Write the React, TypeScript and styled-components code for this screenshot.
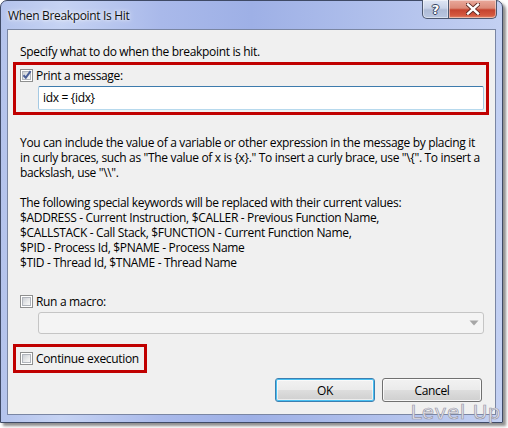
import styled, { createGlobalStyle } from 'styled-components';

const GlobalStyle = createGlobalStyle`
  html, body {
    margin: 0;
    padding: 0;
    background: #fff;
  }
  body {
    font-family: "Open Sans", "Noto Sans", sans-serif;
    font-size: 12px;
    letter-spacing: -0.33px;
    color: #000;
  }
`;

const Page = styled.div`
  width: 508px;
  height: 428px;
  position: relative;
`;

const Window = styled.div`
  position: relative;
  width: 503px;
  height: 423px;
  box-sizing: border-box;
  border: 1px solid #3f4a66;
  border-radius: 7px 7px 0 0;
  background: linear-gradient(90deg, #b4c3ec 0%, #c6d3f3 12%, #a9b9ea 32%, #9eb0e6 50%, #aebeeb 72%, #c3d0f2 100%);
  box-shadow: 3px 3px 3px rgba(0, 0, 0, 0.45);
  display: flex;
  flex-direction: column;
`;

const TitleBar = styled.div`
  height: 28px;
  display: flex;
  align-items: flex-start;
  padding-left: 7px;
`;

const Title = styled.div`
  font-size: 12px;
  line-height: 15px;
  margin-top: 7px;
  color: #111;
  text-shadow: 0 0 6px rgba(255, 255, 255, 0.9), 0 0 3px rgba(255, 255, 255, 0.9);
`;

const CaptionButtons = styled.div`
  margin-left: auto;
  margin-right: 5px;
  margin-top: -1px;
  display: flex;
`;

const CaptionButton = styled.div<{ $close?: boolean }>`
  height: 19px;
  width: ${p => (p.$close ? '48px' : '27px')};
  box-sizing: border-box;
  border: 1px solid #4d5870;
  border-top: none;
  border-left-width: ${p => (p.$close ? '0' : '1px')};
  border-radius: ${p => (p.$close ? '0 0 5px 0' : '0 0 0 5px')};
  background: ${p =>
    p.$close
      ? 'linear-gradient(180deg, #e9a99c 0%, #dc8a78 45%, #c5432f 55%, #d4583f 85%, #e2876a 100%)'
      : 'linear-gradient(180deg, #dfe6f4 0%, #c9d3e8 45%, #aebbd6 55%, #b9c7e1 100%)'};
  box-shadow: inset 0 0 0 1px rgba(255, 255, 255, 0.45);
  display: flex;
  align-items: center;
  justify-content: center;
`;

const HelpGlyph = styled.span`
  font-family: "DejaVu Sans", sans-serif;
  font-weight: bold;
  font-size: 13px;
  line-height: 13px;
  letter-spacing: 0;
  color: #fff;
  text-shadow: 0 0 1px #2a3550, 1px 0 0 #3c4866, -1px 0 0 #3c4866, 0 1px 0 #3c4866, 0 -1px 0 #3c4866;
`;

const Client = styled.div`
  margin: 0 6px 0 6px;
  height: 386px;
  box-sizing: border-box;
  border: 1px solid #7a86a3;
  background: #f0f0f0;
  display: flex;
  flex-direction: column;
`;

const Text = styled.div<{ $indent?: number }>`
  line-height: 15px;
  padding-left: ${p => p.$indent ?? 12}px;
  white-space: nowrap;
`;

const Intro = styled(Text)`
  margin-top: 14px;
`;

const Highlight = styled.div<{ $width: number }>`
  box-sizing: border-box;
  width: ${p => p.$width}px;
  margin-left: 5px;
  border: 3px solid #c00000;
`;

const MessageBox = styled(Highlight)`
  margin-top: 3px;
  height: 53px;
  padding: 3px 0 0 4px;
`;

const CheckRow = styled.label`
  display: flex;
  align-items: center;
  gap: 3px;
  height: 15px;
  line-height: 15px;
  white-space: nowrap;
`;

const Box = styled.span`
  width: 13px;
  height: 13px;
  box-sizing: border-box;
  border: 1px solid #8e8f8f;
  background: #fff;
  padding: 1px;
  display: flex;
  flex-shrink: 0;

  &::before {
    content: '';
    flex: 1;
    background: linear-gradient(135deg, #cbcfd5 0%, #e9eaeb 60%, #f8f8f8 100%);
    border: 1px solid #b0b4bb;
  }
`;

const CheckMark = styled.svg`
  position: absolute;
  left: 1px;
  top: 0;
`;

const BoxWrap = styled.span`
  position: relative;
  display: flex;
`;

const TextInput = styled.div`
  margin: 3px 0 0 18px;
  width: 446px;
  height: 24px;
  box-sizing: border-box;
  background: #fff;
  border: 1px solid #a4c9e3;
  border-top-color: #3d7bad;
  border-bottom-color: #b7d9ed;
  border-radius: 2px;
  padding-left: 4px;
  line-height: 21px;
`;

const Help = styled.div`
  margin-top: 20px;
  display: flex;
  flex-direction: column;
`;

const Gap = styled.div`
  height: 15px;
`;

const MacroRow = styled.div`
  margin: 24px 0 0 12px;
`;

const Dropdown = styled.div`
  margin: 3px 0 0 30px;
  width: 446px;
  height: 22px;
  box-sizing: border-box;
  border: 1px solid #c5c5c5;
  border-radius: 3px;
  background: #f4f4f4;
  display: flex;
  align-items: center;
  justify-content: flex-end;
  padding-right: 4px;
`;

const ContinueBox = styled(Highlight)`
  margin-top: 10px;
  height: 29px;
  padding: 4px 0 0 4px;
`;

const Footer = styled.div`
  margin-top: 5px;
  display: flex;
  justify-content: flex-end;
  gap: 7px;
  padding-right: 13px;
`;

const Button = styled.button<{ $default?: boolean }>`
  width: 100px;
  height: 24px;
  box-sizing: border-box;
  font-family: "Open Sans", "Noto Sans", sans-serif;
  font-size: 12px;
  letter-spacing: -0.33px;
  color: #000;
  border-radius: 3px;
  border: 1px solid ${p => (p.$default ? '#3c7fb1' : '#707070')};
  background: linear-gradient(180deg, #f2f2f2 0%, #ebebeb 48%, #dddddd 52%, #cfcfcf 100%);
  box-shadow: ${p =>
    p.$default ? 'inset 0 0 0 1px #48c0f2, inset 0 0 0 2px rgba(255,255,255,0.6)' : 'inset 0 0 0 1px rgba(255,255,255,0.8)'};
  padding: 0;
`;

const Watermark = styled.span`
  position: absolute;
  right: 7px;
  bottom: 5px;
  font-family: "DejaVu Sans", sans-serif;
  font-size: 20px;
  line-height: 21px;
  letter-spacing: 0.5px;
  color: #e8e8ef;
  -webkit-text-stroke: 0.7px #9696a6;
`;

const Check = ({ checked, label }: { checked?: boolean; label: string }) => (
  <CheckRow>
    <BoxWrap>
      <Box />
      {checked && (
        <CheckMark width="12" height="12" viewBox="0 0 12 12">
          <path d="M2.5 6.2 L4.8 8.6 L9.6 2.2" fill="none" stroke="#4a5f97" strokeWidth="2" />
        </CheckMark>
      )}
    </BoxWrap>
    <span>{label}</span>
  </CheckRow>
);

const helpLines = [
  'You can include the value of a variable or other expression in the message by placing it',
  'in curly braces, such as "The value of x is {x}." To insert a curly brace, use "\\{". To insert a',
  'backslash, use "\\\\".',
];

const keywordLines = [
  'The following special keywords will be replaced with their current values:',
  '$ADDRESS - Current Instruction, $CALLER - Previous Function Name,',
  '$CALLSTACK - Call Stack, $FUNCTION - Current Function Name,',
  '$PID - Process Id, $PNAME - Process Name',
  '$TID - Thread Id, $TNAME - Thread Name',
];

export default function App() {
  return (
    <Page>
      <GlobalStyle />
      <Window>
        <TitleBar>
          <Title>When Breakpoint Is Hit</Title>
          <CaptionButtons>
            <CaptionButton>
              <HelpGlyph>?</HelpGlyph>
            </CaptionButton>
            <CaptionButton $close>
              <svg width="14" height="12" viewBox="0 0 14 12">
                <path d="M2 1.5 L12 10.5 M12 1.5 L2 10.5" stroke="#5a2620" strokeWidth="4.2" strokeLinecap="square" />
                <path d="M2 1.5 L12 10.5 M12 1.5 L2 10.5" stroke="#fff" strokeWidth="2.4" strokeLinecap="square" />
              </svg>
            </CaptionButton>
          </CaptionButtons>
        </TitleBar>
        <Client>
          <Intro>Specify what to do when the breakpoint is hit.</Intro>
          <MessageBox $width={476}>
            <Check checked label="Print a message:" />
            <TextInput>idx = {'{idx}'}</TextInput>
          </MessageBox>
          <Help>
            {helpLines.map(l => (
              <Text key={l}>{l}</Text>
            ))}
            <Gap />
            {keywordLines.map(l => (
              <Text key={l}>{l}</Text>
            ))}
          </Help>
          <MacroRow>
            <Check label="Run a macro:" />
          </MacroRow>
          <Dropdown>
            <svg width="10" height="6" viewBox="0 0 10 6">
              <path d="M0.5 0.5 L9.5 0.5 L5 5.5 Z" fill="#a6a6a6" />
            </svg>
          </Dropdown>
          <ContinueBox $width={134}>
            <Check label="Continue execution" />
          </ContinueBox>
          <Footer>
            <Button $default>OK</Button>
            <Button>Cancel</Button>
          </Footer>
        </Client>
      </Window>
      <Watermark>Level Up</Watermark>
    </Page>
  );
}
